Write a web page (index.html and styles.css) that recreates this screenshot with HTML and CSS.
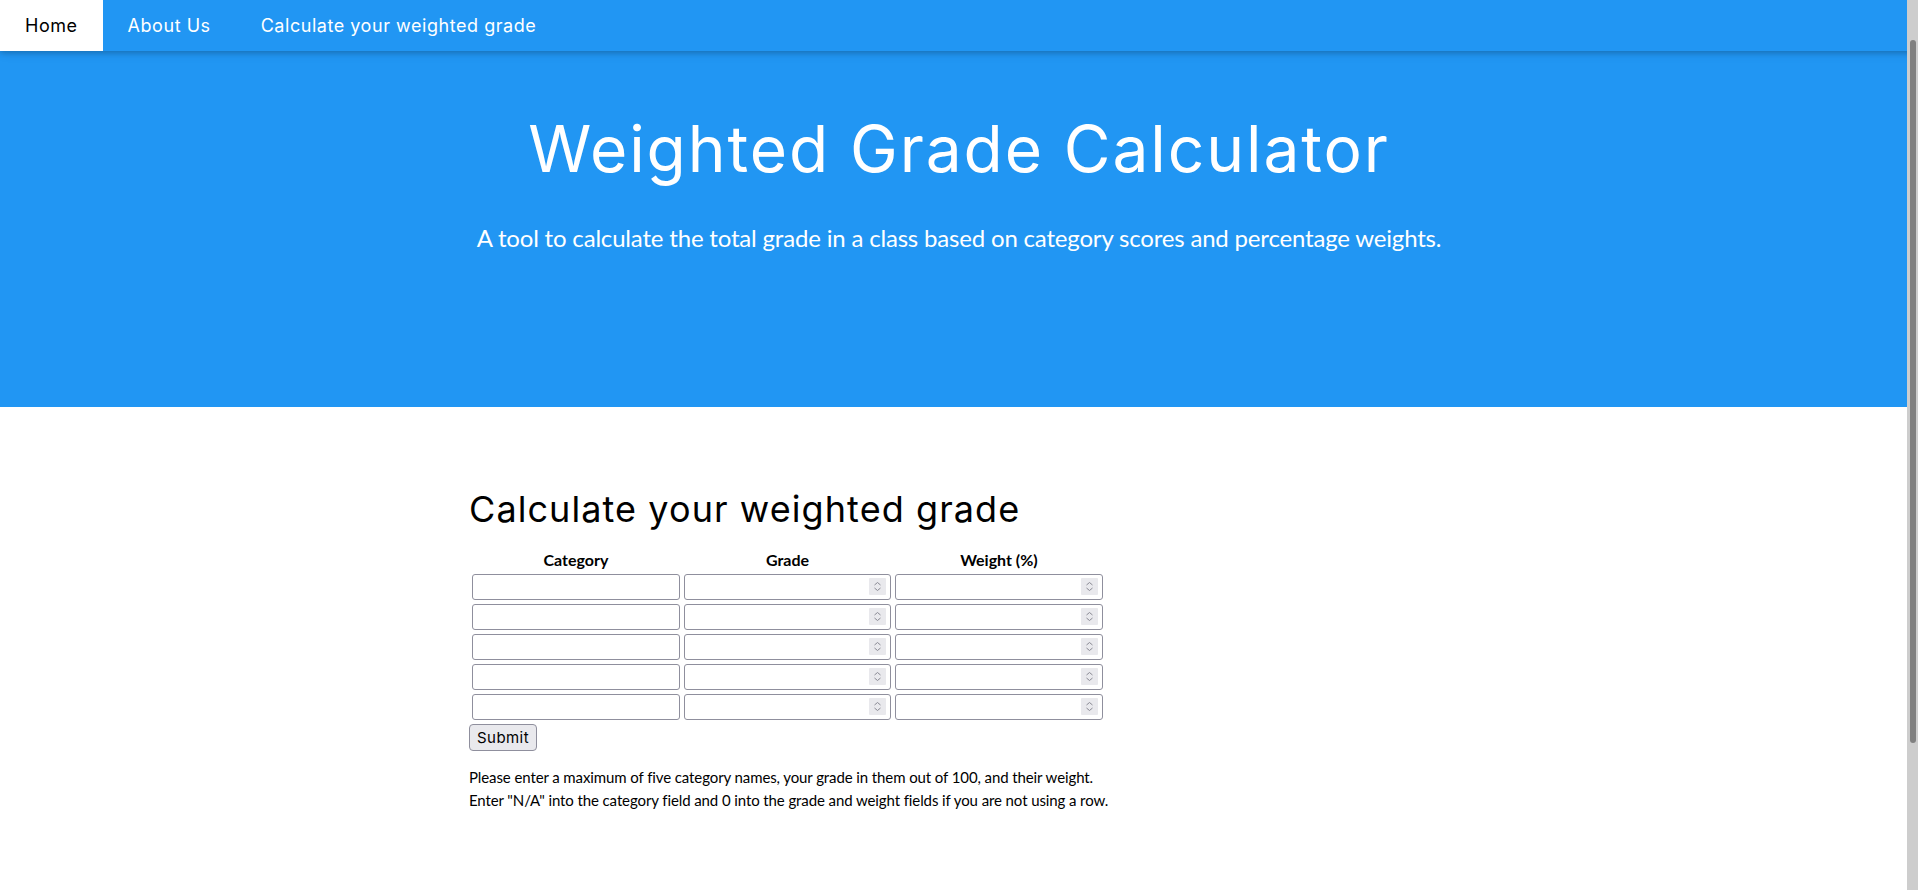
FILE: index.html
```html
<!DOCTYPE html>
<html lang="en">
<head>
<meta charset="utf-8">
<title>Weighted Grade Calculator</title>
<link rel="stylesheet" href="styles.css">
</head>
<body>
<nav class="topbar">
  <a class="nav-item active" href="#">Home</a>
  <a class="nav-item" href="#">About Us</a>
  <a class="nav-item" href="#">Calculate your weighted grade</a>
</nav>

<header class="hero">
  <h1 class="hero-title">Weighted Grade Calculator</h1>
  <p class="hero-sub">A tool to calculate the total grade in a class based on category scores and percentage weights.</p>
</header>

<section class="calc">
  <div class="calc-inner">
    <h2 class="calc-title">Calculate your weighted grade</h2>
    <form class="calc-form">
      <table class="grade-table">
        <thead>
          <tr><th>Category</th><th>Grade</th><th>Weight (%)</th></tr>
        </thead>
        <tbody>
          <tr>
            <td><input class="field field-cat" type="text"></td>
            <td><span class="num"><input class="field field-grade" type="number"><span class="spin"><svg viewBox="0 0 17 17" width="17" height="17"><polyline points="5.5,7 8.5,4.5 11.5,7"/><polyline points="5.5,10 8.5,12.5 11.5,10"/></svg></span></span></td>
            <td><span class="num"><input class="field field-weight" type="number"><span class="spin"><svg viewBox="0 0 17 17" width="17" height="17"><polyline points="5.5,7 8.5,4.5 11.5,7"/><polyline points="5.5,10 8.5,12.5 11.5,10"/></svg></span></span></td>
          </tr>
          <tr>
            <td><input class="field field-cat" type="text"></td>
            <td><span class="num"><input class="field field-grade" type="number"><span class="spin"><svg viewBox="0 0 17 17" width="17" height="17"><polyline points="5.5,7 8.5,4.5 11.5,7"/><polyline points="5.5,10 8.5,12.5 11.5,10"/></svg></span></span></td>
            <td><span class="num"><input class="field field-weight" type="number"><span class="spin"><svg viewBox="0 0 17 17" width="17" height="17"><polyline points="5.5,7 8.5,4.5 11.5,7"/><polyline points="5.5,10 8.5,12.5 11.5,10"/></svg></span></span></td>
          </tr>
          <tr>
            <td><input class="field field-cat" type="text"></td>
            <td><span class="num"><input class="field field-grade" type="number"><span class="spin"><svg viewBox="0 0 17 17" width="17" height="17"><polyline points="5.5,7 8.5,4.5 11.5,7"/><polyline points="5.5,10 8.5,12.5 11.5,10"/></svg></span></span></td>
            <td><span class="num"><input class="field field-weight" type="number"><span class="spin"><svg viewBox="0 0 17 17" width="17" height="17"><polyline points="5.5,7 8.5,4.5 11.5,7"/><polyline points="5.5,10 8.5,12.5 11.5,10"/></svg></span></span></td>
          </tr>
          <tr>
            <td><input class="field field-cat" type="text"></td>
            <td><span class="num"><input class="field field-grade" type="number"><span class="spin"><svg viewBox="0 0 17 17" width="17" height="17"><polyline points="5.5,7 8.5,4.5 11.5,7"/><polyline points="5.5,10 8.5,12.5 11.5,10"/></svg></span></span></td>
            <td><span class="num"><input class="field field-weight" type="number"><span class="spin"><svg viewBox="0 0 17 17" width="17" height="17"><polyline points="5.5,7 8.5,4.5 11.5,7"/><polyline points="5.5,10 8.5,12.5 11.5,10"/></svg></span></span></td>
          </tr>
          <tr>
            <td><input class="field field-cat" type="text"></td>
            <td><span class="num"><input class="field field-grade" type="number"><span class="spin"><svg viewBox="0 0 17 17" width="17" height="17"><polyline points="5.5,7 8.5,4.5 11.5,7"/><polyline points="5.5,10 8.5,12.5 11.5,10"/></svg></span></span></td>
            <td><span class="num"><input class="field field-weight" type="number"><span class="spin"><svg viewBox="0 0 17 17" width="17" height="17"><polyline points="5.5,7 8.5,4.5 11.5,7"/><polyline points="5.5,10 8.5,12.5 11.5,10"/></svg></span></span></td>
          </tr>
        </tbody>
      </table>
      <button class="submit" type="button">Submit</button>
    </form>
    <p class="note">Please enter a maximum of five category names, your grade in them out of 100, and their weight.<br>Enter "N/A" into the category field and 0 into the grade and weight fields if you are not using a row.</p>
  </div>
</section>

<div class="scrollbar"><div class="scroll-thumb"></div></div>
</body>
</html>
```
FILE: styles.css
```css
html, body {
  margin: 0;
  padding: 0;
}
body {
  font-family: Lato, "Open Sans", sans-serif;
  font-size: 15px;
  line-height: 1.5;
  color: #000;
  background: #fff;
  overflow: hidden;
}

/* top navigation */
.topbar {
  position: relative;
  z-index: 2;
  display: flex;
  height: 51px;
  background: #2196f3;
  box-shadow: 0 2px 5px 0 rgba(0,0,0,0.16), 0 2px 10px 0 rgba(0,0,0,0.12);
}
.nav-item {
  display: block;
  padding: 12px 25px;
  font-family: Inter, "Open Sans", sans-serif;
  font-size: 18px;
  line-height: 27px;
  letter-spacing: 0.03em;
  color: #fff;
  text-decoration: none;
}
.nav-item.active {
  background: #fff;
  color: #000;
}

/* hero */
.hero {
  background: #2196f3;
  color: #fff;
  text-align: center;
  padding: 50px 16px 151px;
}
.hero-title {
  margin: 0;
  font-family: Inter, "Open Sans", sans-serif;
  font-weight: 400;
  font-size: 64px;
  line-height: 96px;
  letter-spacing: 0.03em;
}
.hero-sub {
  margin: 23px 0 0;
  font-size: 24px;
  line-height: 36px;
  letter-spacing: -0.18px;
}

/* calculator */
.calc {
  padding: 75px 16px 30px;
}
.calc-inner {
  max-width: 980px;
  margin: 0 auto;
}
.calc-title {
  margin: 0;
  font-family: Inter, "Open Sans", sans-serif;
  font-weight: 400;
  font-size: 36px;
  line-height: 54px;
  letter-spacing: 0.03em;
  color: #000;
}
.calc-form {
  margin: 0;
}
.grade-table {
  margin-top: 10px;
  border-collapse: separate;
  border-spacing: 2px;
}
.grade-table th {
  padding: 1px;
  font-weight: 700;
  font-size: 16px;
  line-height: 21px;
  text-align: center;
}
.grade-table td {
  padding: 1px;
}
.num {
  position: relative;
  display: block;
}
.field {
  display: block;
  box-sizing: border-box;
  height: 26px;
  margin: 0;
  padding: 1px 4px;
  border: 1px solid #8f8f9d;
  border-radius: 3px;
  background: #fff;
  font-family: Lato, sans-serif;
  font-size: 13px;
  -moz-appearance: textfield;
  appearance: textfield;
}
.field::-webkit-inner-spin-button,
.field::-webkit-outer-spin-button {
  -webkit-appearance: none;
  margin: 0;
}
.field-cat { width: 208px; }
.field-grade { width: 207px; }
.field-weight { width: 208px; }

.spin {
  position: absolute;
  top: 4px;
  right: 5px;
  width: 17px;
  height: 17px;
  background: #e9e9ed;
  border-radius: 1px;
}
.spin svg {
  display: block;
  fill: none;
  stroke: #8a8a94;
  stroke-width: 1;
}

.submit {
  display: block;
  margin: 1px 0 0 0;
  height: 27px;
  padding: 2px 7px;
  border: 1px solid #8f8f9d;
  border-radius: 4px;
  background: #e9e9ed;
  color: #000;
  font-family: Inter, "Open Sans", sans-serif;
  font-size: 15px;
  line-height: 21px;
  letter-spacing: 0.03em;
}
.note {
  margin: 15px 0 0;
  font-size: 15px;
  line-height: 22.5px;
  letter-spacing: -0.1px;
}

/* overlay scrollbar */
.scrollbar {
  position: fixed;
  top: 0;
  right: 0;
  width: 11px;
  height: 100%;
  background: #cdcdcd;
  z-index: 5;
}
.scroll-thumb {
  position: absolute;
  top: 40px;
  left: 3px;
  width: 6px;
  height: 703px;
  border-radius: 3px;
  background: #808080;
}
```
